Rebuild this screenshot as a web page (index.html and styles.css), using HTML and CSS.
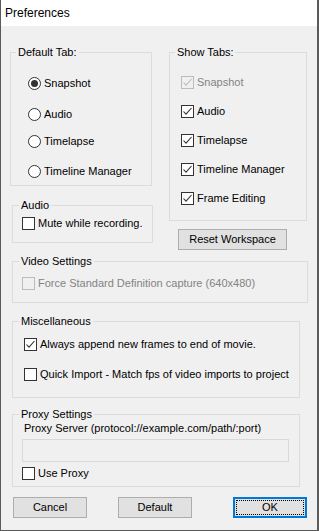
FILE: index.html
```html
<!DOCTYPE html>
<html>
<head>
<meta charset="utf-8">
<link rel="stylesheet" href="styles.css">
</head>
<body>
<div class="window">
  <div class="titlebar">Preferences</div>
  <div class="content">
    <div class="top">
      <div class="col-left">
        <fieldset class="group g-default">
          <legend>Default Tab:</legend>
          <div class="opt r1"><span class="radio checked"></span>Snapshot</div>
          <div class="opt r2"><span class="radio"></span>Audio</div>
          <div class="opt r3"><span class="radio"></span>Timelapse</div>
          <div class="opt r4"><span class="radio"></span>Timeline Manager</div>
        </fieldset>
        <fieldset class="group g-audio">
          <legend>Audio</legend>
          <div class="opt"><span class="check"></span>Mute while recording.</div>
        </fieldset>
      </div>
      <div class="col-right">
        <fieldset class="group g-show">
          <legend>Show Tabs:</legend>
          <div class="opt disabled"><span class="check on"><svg viewBox="0 0 11 11"><polyline points="1.5,5.5 4,8.2 9.5,2"/></svg></span>Snapshot</div>
          <div class="opt"><span class="check on"><svg viewBox="0 0 11 11"><polyline points="1.5,5.5 4,8.2 9.5,2"/></svg></span>Audio</div>
          <div class="opt"><span class="check on"><svg viewBox="0 0 11 11"><polyline points="1.5,5.5 4,8.2 9.5,2"/></svg></span>Timelapse</div>
          <div class="opt"><span class="check on"><svg viewBox="0 0 11 11"><polyline points="1.5,5.5 4,8.2 9.5,2"/></svg></span>Timeline Manager</div>
          <div class="opt"><span class="check on"><svg viewBox="0 0 11 11"><polyline points="1.5,5.5 4,8.2 9.5,2"/></svg></span>Frame Editing</div>
        </fieldset>
        <button class="btn btn-reset">Reset Workspace</button>
      </div>
    </div>

    <fieldset class="group g-video">
      <legend>Video Settings</legend>
      <div class="opt disabled"><span class="check"></span>Force Standard Definition capture (640x480)</div>
    </fieldset>

    <fieldset class="group g-misc">
      <legend>Miscellaneous</legend>
      <div class="opt m1"><span class="check on"><svg viewBox="0 0 11 11"><polyline points="1.5,5.5 4,8.2 9.5,2"/></svg></span>Always append new frames to end of movie.</div>
      <div class="opt m2"><span class="check"></span>Quick Import - Match fps of video imports to project</div>
    </fieldset>

    <fieldset class="group g-proxy">
      <legend>Proxy Settings</legend>
      <div class="proxy-label">Proxy Server (protocol://example.com/path/:port)</div>
      <div class="proxy-input"></div>
      <div class="opt"><span class="check"></span>Use Proxy</div>
    </fieldset>

    <div class="buttons">
      <button class="btn btn-cancel">Cancel</button>
      <button class="btn btn-default">Default</button>
      <button class="btn btn-ok">OK</button>
    </div>
  </div>
</div>
</body>
</html>
```
FILE: styles.css
```css
* { box-sizing: border-box; }
html, body { margin: 0; padding: 0; }
body {
  font-family: "Liberation Sans", Arial, sans-serif;
  font-size: 11px;
  color: #000;
  background: #f0f0f0;
}
.window {
  width: 319px;
  height: 531px;
  border-left: 1px solid #5a5a5a;
  border-right: 2px solid #5a5a5a;
  border-bottom: 1px solid #5a5a5a;
  background: #f0f0f0;
  overflow: hidden;
}
.titlebar {
  height: 26px;
  background: #fff;
  font-size: 12px;
  line-height: 26px;
  padding-left: 4px;
}
.content {
  display: flex;
  flex-direction: column;
  align-items: flex-start;
}
.top {
  display: flex;
  gap: 16px;
  margin-left: 9px;
  margin-top: 20px;
}
.col-left, .col-right {
  display: flex;
  flex-direction: column;
  align-items: flex-start;
}
.col-left { width: 143px; }
.col-right { width: 138px; }

.group {
  margin: 0;
  padding: 0;
  border: 1px solid #dcdcdc;
  min-width: 0;
}
.group legend {
  padding: 0 2px;
  margin-left: 6px;
  line-height: 12px;
  font-size: 11px;
}
.opt {
  display: flex;
  align-items: center;
  height: 13px;
  line-height: 13px;
  gap: 3px;
  white-space: nowrap;
}
.opt.disabled { color: #838383; }

.radio {
  width: 13px;
  height: 13px;
  border: 1px solid #333;
  border-radius: 50%;
  background: #fff;
  display: flex;
  align-items: center;
  justify-content: center;
  flex: none;
}
.radio.checked::before {
  content: "";
  width: 7px;
  height: 7px;
  border-radius: 50%;
  background: #333;
}
.check {
  width: 13px;
  height: 13px;
  border: 1px solid #333;
  background: #fff;
  flex: none;
  display: flex;
}
.check svg {
  width: 11px;
  height: 11px;
  fill: none;
  stroke: #333;
  stroke-width: 1.1;
}
.disabled .check {
  border-color: #bcbcbc;
  background: #f0f0f0;
}
.disabled .check svg { stroke: #bcbcbc; }

/* Default Tab */
.g-default { width: 142px; padding-bottom: 7px; }
.g-default legend { margin-left: 5px; }
.g-default .opt { margin-left: 17px; }
.g-default .r1 { margin-top: 19px; }
.g-default .r2 { margin-top: 18px; }
.g-default .r3 { margin-top: 14px; }
.g-default .r4 { margin-top: 17px; }

/* Audio */
.g-audio { width: 141px; margin-left: 2px; margin-top: 13px; padding-bottom: 12px; }
.g-audio .opt { margin-left: 9px; margin-top: 6px; }

/* Show Tabs */
.g-show { width: 138px; padding-bottom: 15px; }
.g-show legend { margin-left: 5px; }
.g-show .opt { margin-left: 11px; margin-top: 16px; }
.g-show .opt:first-of-type { margin-top: 18px; }

.btn {
  font-family: "Liberation Sans", Arial, sans-serif;
  font-size: 11px;
  color: #000;
  background: #e1e1e1;
  border: 1px solid #adadad;
  height: 21px;
  padding: 0;
  line-height: 19px;
  text-align: center;
  border-radius: 0;
}
.btn-reset { width: 109px; margin-left: 9px; margin-top: 8px; }

/* Video */
.g-video { width: 296px; margin-left: 11px; margin-top: 5px; padding-bottom: 12px; }
.g-video .opt { margin-left: 9px; margin-top: 10px; }

/* Misc */
.g-misc { width: 288px; margin-left: 11px; margin-top: 12px; padding-bottom: 16px; }
.g-misc .opt { margin-left: 11px; }
.g-misc .m1 { margin-top: 11px; }
.g-misc .m2 { margin-top: 17px; }

/* Proxy */
.g-proxy { width: 288px; margin-left: 11px; margin-top: 10px; padding-bottom: 6px; }
.proxy-label { margin-left: 11px; margin-top: 2px; line-height: 13px; white-space: nowrap; }
.proxy-input {
  margin-left: 9px;
  margin-top: 4px;
  width: 267px;
  height: 23px;
  border: 1px solid #d9d9d9;
  background: #f0f0f0;
}
.g-proxy .opt { margin-left: 9px; margin-top: 5px; }

/* Bottom buttons */
.buttons {
  display: flex;
  margin-top: 10px;
  margin-left: 12px;
}
.btn-cancel, .btn-default, .btn-ok { width: 74px; }
.btn-default { margin-left: 31px; }
.btn-ok {
  margin-left: 41px;
  border: 2px solid #0078d7;
  line-height: 17px;
  outline: 1px dotted #000;
  outline-offset: -4px;
}
```
